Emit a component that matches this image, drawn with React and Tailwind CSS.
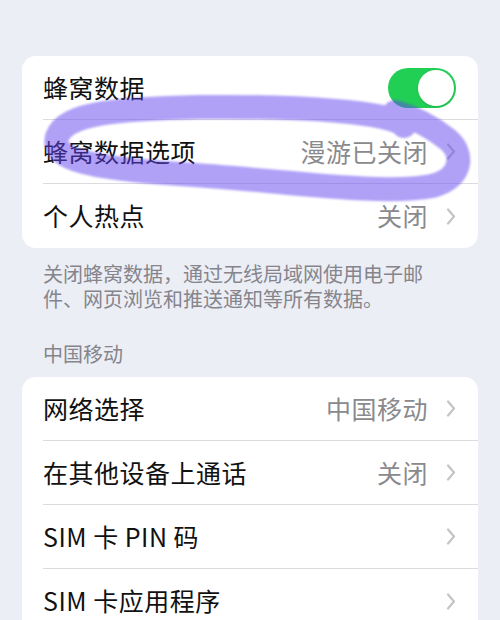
import React from 'react'

const font = { fontFamily: '"Noto Sans CJK SC", "Noto Sans", sans-serif' }

const Chevron = () => (
  <svg width="10" height="17" viewBox="0 0 10 17" className="shrink-0">
    <path d="M2 1.5l6 7-6 7" fill="none" stroke="#c4c4c8" strokeWidth="2.2" strokeLinecap="round" strokeLinejoin="round" />
  </svg>
)

const Toggle = () => (
  <div className="w-[68px] h-[40px] rounded-full bg-[#22cf55] p-[2px] flex justify-end">
    <div className="w-[36px] h-[36px] rounded-full bg-white shadow-sm" />
  </div>
)

const Row = ({ label, value, toggle, last }) => (
  <div className="flex items-center h-[64px] pl-[21px]">
    <div className={`flex items-center h-full flex-1 pr-[22px] ${last ? '' : 'border-b border-[#dcdce0]'}`}>
      <span className="flex-1 text-[25px] text-[#111] tracking-[0.5px]">{label}</span>
      {toggle ? (
        <Toggle />
      ) : (
        <div className="flex items-center gap-[18px]">
          {value && <span className="text-[25px] text-[#8a8a8e] tracking-[0.5px]">{value}</span>}
          <Chevron />
        </div>
      )}
    </div>
  </div>
)

export default function App() {
  return (
    <div className="relative w-[500px] h-[620px] overflow-hidden bg-[#eceef6]" style={font}>
      <div className="flex flex-col px-[22px] pt-[56px]">
        <div className="bg-white rounded-[14px] overflow-hidden">
          <Row label="蜂窝数据" toggle />
          <Row label="蜂窝数据选项" value="漫游已关闭" />
          <Row label="个人热点" value="关闭" last />
        </div>
        <p className="mt-[13px] pl-[21px] pr-[36px] text-[20px] leading-[25px] text-[#85858b]">
          关闭蜂窝数据，通过无线局域网使用电子邮件、网页浏览和推送通知等所有数据。
        </p>
        <p className="mt-[30px] pl-[21px] text-[20px] leading-[25px] text-[#85858b]">中国移动</p>
        <div className="mt-[11px] bg-white rounded-[14px] overflow-hidden">
          <Row label="网络选择" value="中国移动" />
          <Row label="在其他设备上通话" value="关闭" />
          <Row label="SIM 卡 PIN 码" />
          <Row label="SIM 卡应用程序" last />
        </div>
      </div>
      <svg className="absolute left-0 top-0 pointer-events-none blur-[1px]" width="500" height="620" viewBox="0 0 500 620">
        <path
          d="M404 126 C395 112 300 106 200 107 C120 109 66 112 57 137 C51 160 92 168 180 174 C280 180 380 196 432 186 C464 178 464 152 447 139 C432 127 412 117 395 112"
          fill="none"
          stroke="#6244f0"
          strokeOpacity="0.5"
          strokeWidth="24"
          strokeLinecap="round"
          strokeLinejoin="round"
        />
      </svg>
    </div>
  )
}
